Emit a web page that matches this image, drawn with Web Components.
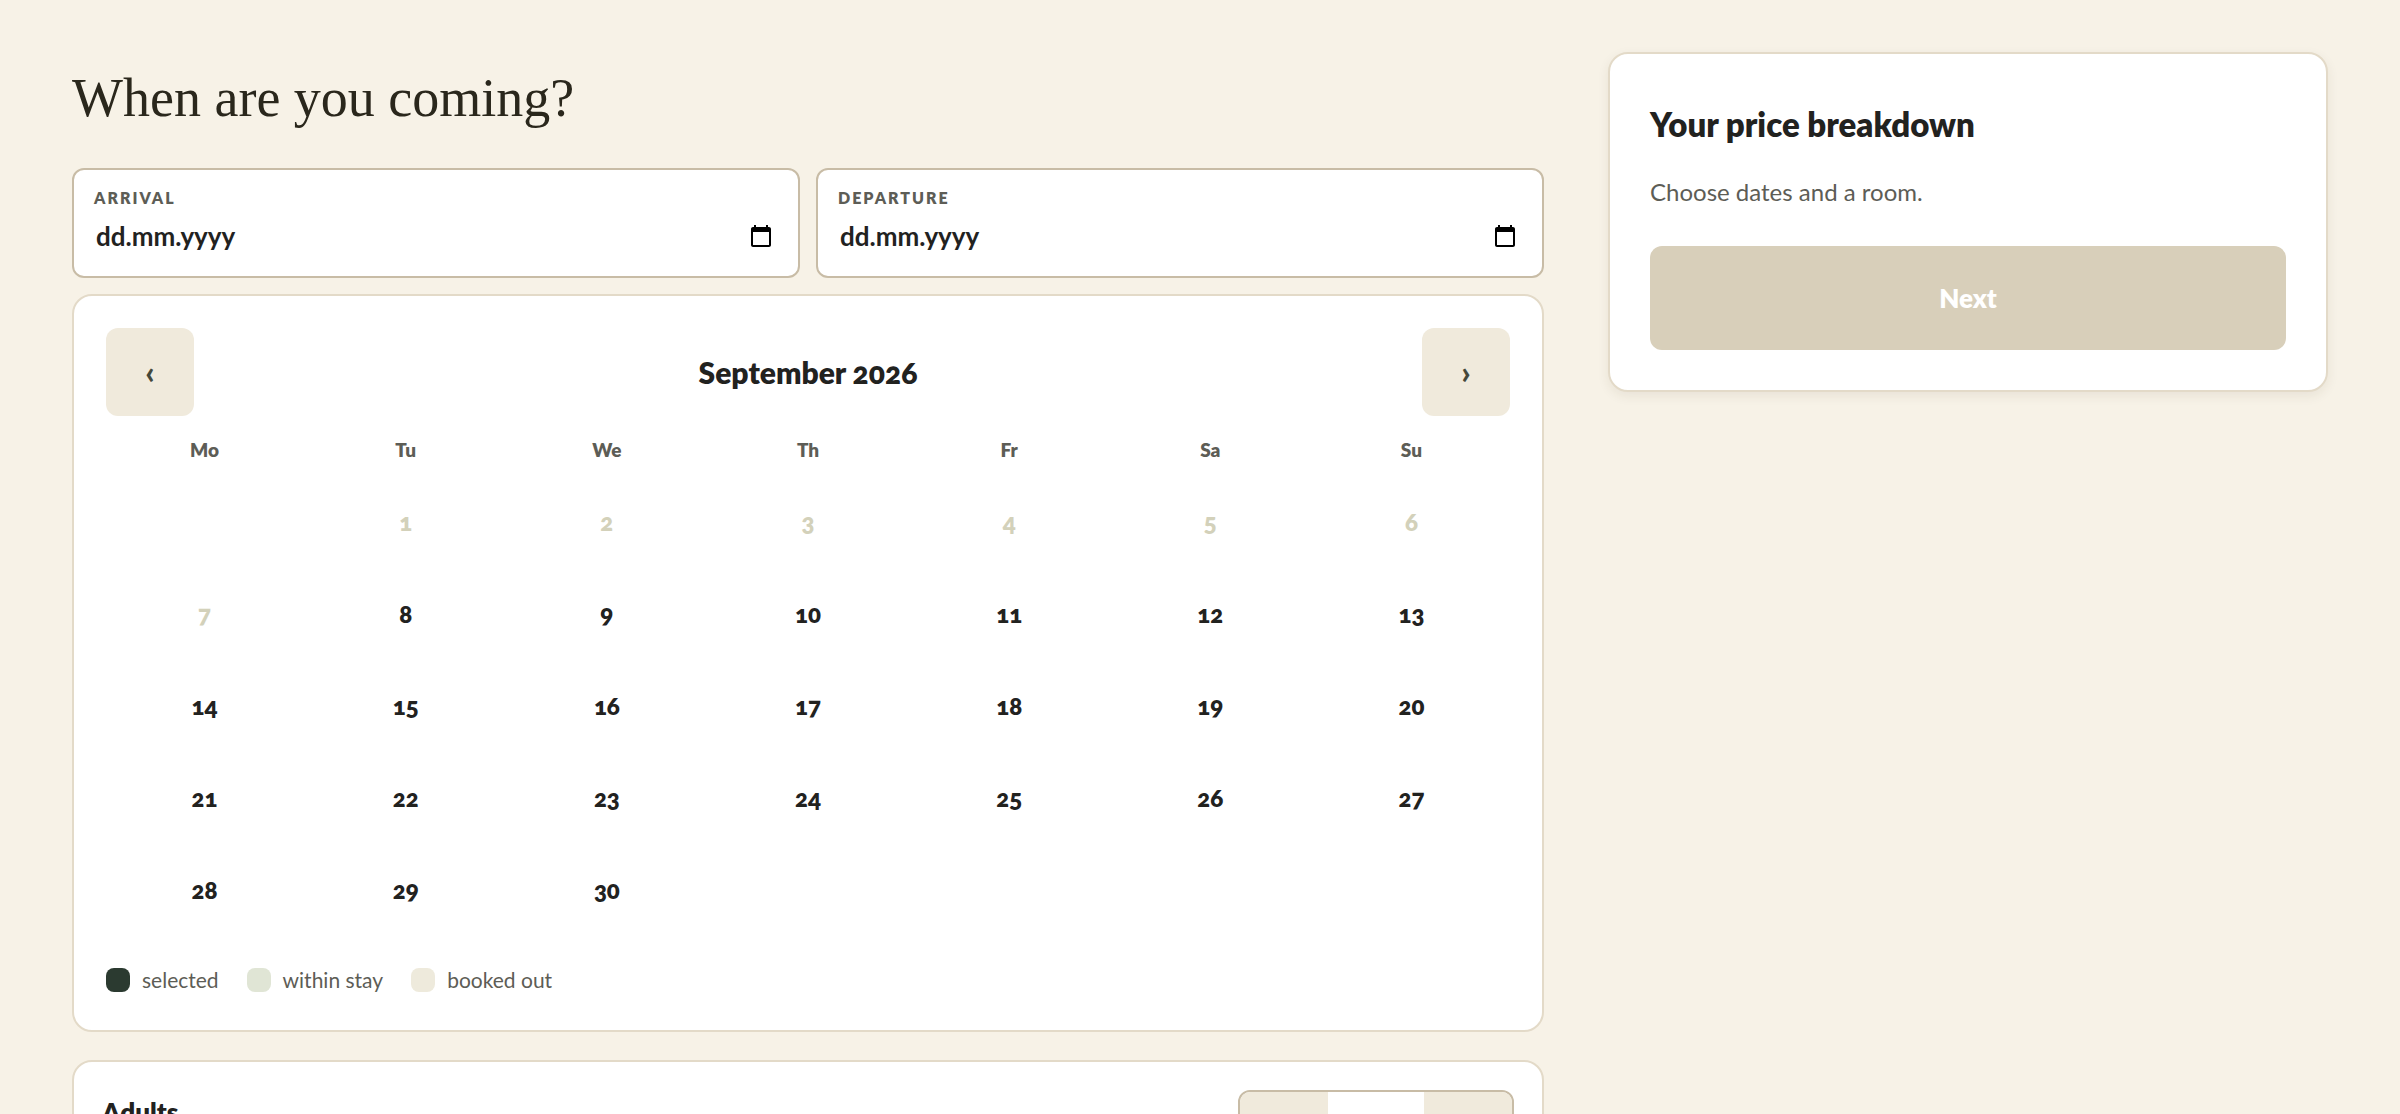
<!DOCTYPE html>
<html lang="en">
<head>
<meta charset="utf-8">
<meta name="viewport" content="width=device-width, initial-scale=1">
<title>When are you coming?</title>
<style>
    html {
        scrollbar-width: none;
    }
    body {
        --line: #e3dac8;
        --line-strong: #c8bca6;
        --sand: #f0eadc;
        --sand-dark: #d8cfba;
        --ink: #22221f;
        --muted: #5d5d56;
        margin: 0;
        background-color: #f7f2e7;
        color: var(--ink);
        font-family: Lato, "Open Sans", sans-serif;
        font-size: 24px;
        line-height: 36px;
    }
</style>
</head>
<body>
<booking-page>
    <h1 slot="title">When are you coming?</h1>
    <date-field slot="dates" label="Arrival" name="arrival"></date-field>
    <date-field slot="dates" label="Departure" name="departure"></date-field>
    <month-calendar slot="main" year="2026" month="9" first-free="8"></month-calendar>
    <guest-stepper slot="main" value="2">Adults</guest-stepper>
    <price-summary slot="aside" heading="Your price breakdown" action="Next">Choose dates and a room.</price-summary>
</booking-page>

<script>
class BookingPage extends HTMLElement {
    constructor() {
        super();
        this.attachShadow({ mode: 'open' });
        this.shadowRoot.innerHTML = `
            <style>
                :host {
                    display: grid;
                    grid-template-columns: minmax(0, 1fr) 720px;
                    align-items: start;
                    gap: 64px;
                    padding: 52px 72px;
                }
                ::slotted(h1) {
                    margin: 8px 0 32px;
                    font: 500 54px/76px "Liberation Serif", serif;
                    color: #2a271c;
                }
                .dates {
                    display: grid;
                    grid-template-columns: 1fr 1fr;
                    gap: 16px;
                    margin-bottom: 16px;
                }
                .stack {
                    display: grid;
                    gap: 28px;
                }
                @media (max-width: 1400px) {
                    :host {
                        grid-template-columns: minmax(0, 1fr);
                    }
                }
            </style>
            <main>
                <slot name="title"></slot>
                <div class="dates"><slot name="dates"></slot></div>
                <div class="stack"><slot name="main"></slot></div>
            </main>
            <aside><slot name="aside"></slot></aside>
        `;
    }
}

class DateField extends HTMLElement {
    constructor() {
        super();
        this.attachShadow({ mode: 'open' });
    }

    connectedCallback() {
        const label = this.getAttribute('label');
        this.shadowRoot.innerHTML = `
            <style>
                :host {
                    display: block;
                    box-sizing: border-box;
                    padding: 16px 20px 22px;
                    border: 2px solid var(--line-strong);
                    border-radius: 12px;
                    background-color: #fff;
                }
                label {
                    display: block;
                    font-size: 16px;
                    font-weight: 800;
                    line-height: 24px;
                    letter-spacing: 2px;
                    text-transform: uppercase;
                    color: var(--muted);
                }
                .row {
                    display: flex;
                    align-items: center;
                    margin-top: 8px;
                    padding: 0 5px 0 2px;
                }
                input {
                    flex: 1;
                    min-width: 0;
                    height: 36px;
                    padding: 0;
                    border: 0;
                    outline: 0;
                    background: none;
                    font: inherit;
                    font-size: 26px;
                    font-weight: 700;
                    color: inherit;
                }
                input::placeholder {
                    color: inherit;
                    opacity: 1;
                }
                button {
                    display: flex;
                    padding: 0;
                    border: 0;
                    background: none;
                    color: #000;
                    cursor: pointer;
                }
            </style>
            <label for="date">${label}</label>
            <div class="row">
                <input id="date" name="${this.getAttribute('name')}" placeholder="dd.mm.yyyy" autocomplete="off">
                <button type="button" aria-label="Open calendar">
                    <svg width="24" height="24" viewBox="0 0 24 24" fill="currentColor" aria-hidden="true">
                        <path d="M20 3h-1V1h-2v2H7V1H5v2H4c-1.1 0-2 .9-2 2v16c0 1.1.9 2 2 2h16c1.1 0 2-.9 2-2V5c0-1.1-.9-2-2-2zm0 18H4V8h16v13z"/>
                    </svg>
                </button>
            </div>
        `;
    }
}

class MonthCalendar extends HTMLElement {
    constructor() {
        super();
        this.attachShadow({ mode: 'open' });
    }

    connectedCallback() {
        const year = Number(this.getAttribute('year'));
        const month = Number(this.getAttribute('month'));
        const firstFree = Number(this.getAttribute('first-free'));
        const first = new Date(year, month - 1, 1);
        const title = first.toLocaleDateString('en-US', { month: 'long', year: 'numeric' });
        const count = new Date(year, month, 0).getDate();
        // week starts on Monday
        const offset = (first.getDay() + 6) % 7;

        const names = ['Mo', 'Tu', 'We', 'Th', 'Fr', 'Sa', 'Su'];
        const weekdays = names.map(n => `<span class="weekday">${n}</span>`).join('');
        let days = '<span></span>'.repeat(offset);
        for (let d = 1; d <= count; d++) {
            days += `<button type="button" class="day" ${d < firstFree ? 'disabled' : ''}>${d}</button>`;
        }

        this.shadowRoot.innerHTML = `
            <style>
                :host {
                    display: block;
                    padding: 32px;
                    border: 2px solid var(--line);
                    border-radius: 20px;
                    background-color: #fff;
                    font-variant-numeric: oldstyle-nums;
                }
                header {
                    display: flex;
                    align-items: center;
                    justify-content: space-between;
                }
                h2 {
                    margin: 0;
                    font-size: 30px;
                    font-weight: 800;
                }
                button {
                    padding: 0;
                    border: 0;
                    border-radius: 12px;
                    background: none;
                    font: inherit;
                    font-weight: 800;
                    color: inherit;
                    cursor: pointer;
                }
                .nav {
                    width: 88px;
                    height: 88px;
                    background-color: var(--sand);
                    font-size: 32px;
                    font-weight: 900;
                    color: #44483a;
                }
                .grid {
                    display: grid;
                    grid-template-columns: repeat(7, 1fr);
                    gap: 4px;
                    margin-top: 16px;
                    text-align: center;
                }
                .weekday {
                    padding: 0 0 6px;
                    font-size: 19px;
                    font-weight: 800;
                    color: var(--muted);
                }
                .day {
                    height: 88px;
                }
                .day:disabled {
                    color: #d3d1ba;
                    cursor: default;
                }
                ul {
                    display: flex;
                    flex-wrap: wrap;
                    gap: 28px;
                    margin: 28px 0 0;
                    padding: 0;
                    list-style: none;
                    font-size: 21px;
                    color: var(--muted);
                }
                li {
                    display: flex;
                    align-items: center;
                    gap: 12px;
                }
                li::before {
                    content: "";
                    width: 24px;
                    height: 24px;
                    border-radius: 8px;
                    background-color: #2b3a30;
                }
                .stay::before {
                    background-color: #e0e5d5;
                }
                .booked::before {
                    background-color: #eeeadc;
                }
            </style>
            <header>
                <button type="button" class="nav" aria-label="Previous month">‹</button>
                <h2>${title}</h2>
                <button type="button" class="nav" aria-label="Next month">›</button>
            </header>
            <div class="grid">${weekdays}${days}</div>
            <ul>
                <li>selected</li>
                <li class="stay">within stay</li>
                <li class="booked">booked out</li>
            </ul>
        `;
    }
}

class GuestStepper extends HTMLElement {
    constructor() {
        super();
        this.attachShadow({ mode: 'open' });
        this.shadowRoot.innerHTML = `
            <style>
                :host {
                    display: flex;
                    align-items: flex-start;
                    justify-content: space-between;
                    padding: 28px;
                    border: 2px solid var(--line);
                    border-radius: 20px;
                    background-color: #fff;
                }
                .name {
                    padding-top: 4px;
                    font-size: 26px;
                    font-weight: 800;
                }
                .stepper {
                    display: grid;
                    grid-template-columns: 88px 96px 88px;
                    overflow: hidden;
                    border: 2px solid var(--line-strong);
                    border-radius: 12px;
                }
                button {
                    height: 88px;
                    padding: 0;
                    border: 0;
                    background-color: var(--sand);
                    font: inherit;
                    font-size: 30px;
                    color: inherit;
                }
                output {
                    align-self: center;
                    text-align: center;
                    font-weight: 700;
                }
            </style>
            <span class="name"><slot></slot></span>
            <div class="stepper">
                <button type="button" aria-label="Fewer">−</button>
                <output></output>
                <button type="button" aria-label="More">+</button>
            </div>
        `;
    }

    connectedCallback() {
        const output = this.shadowRoot.querySelector('output');
        const [less, more] = this.shadowRoot.querySelectorAll('button');
        let value = Number(this.getAttribute('value'));
        const show = () => { output.textContent = value; };
        less.addEventListener('click', () => { value = Math.max(1, value - 1); show(); });
        more.addEventListener('click', () => { value += 1; show(); });
        show();
    }
}

class PriceSummary extends HTMLElement {
    constructor() {
        super();
        this.attachShadow({ mode: 'open' });
    }

    connectedCallback() {
        this.shadowRoot.innerHTML = `
            <style>
                :host {
                    display: block;
                    padding: 40px;
                    border: 2px solid var(--line);
                    border-radius: 20px;
                    background-color: #fff;
                    box-shadow: 0 4px 12px rgba(60, 50, 20, 0.08);
                }
                h2 {
                    margin: 8px 0 28px;
                    font-size: 33px;
                    font-weight: 800;
                    line-height: 44px;
                }
                p {
                    margin: 0 0 36px;
                    color: var(--muted);
                }
                button {
                    display: block;
                    width: 100%;
                    height: 104px;
                    border: 0;
                    border-radius: 12px;
                    background-color: var(--sand-dark);
                    font: inherit;
                    font-size: 26px;
                    font-weight: 800;
                    color: #fff;
                }
            </style>
            <h2>${this.getAttribute('heading')}</h2>
            <p><slot></slot></p>
            <button type="button" disabled>${this.getAttribute('action')}</button>
        `;
    }
}

customElements.define('date-field', DateField);
customElements.define('month-calendar', MonthCalendar);
customElements.define('guest-stepper', GuestStepper);
customElements.define('price-summary', PriceSummary);
customElements.define('booking-page', BookingPage);
</script>
</body>
</html>
